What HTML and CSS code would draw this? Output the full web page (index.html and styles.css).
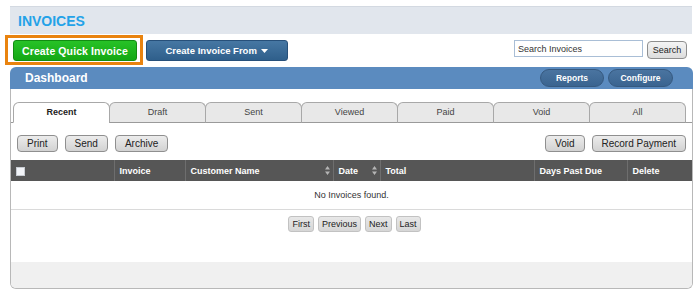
FILE: index.html
```html
<!DOCTYPE html>
<html lang="en">
<head>
<meta charset="UTF-8">
<title>Invoices</title>
<link rel="stylesheet" href="styles.css">
</head>
<body>
<div class="page">
  <div class="title-bar"><h1>INVOICES</h1></div>

  <div class="toolbar">
    <div class="highlight">
      <button class="btn-green">Create Quick Invoice</button>
    </div>
    <button class="btn-blue">Create Invoice From
      <svg width="7" height="4" viewBox="0 0 7 4"><path d="M0 0h7L3.5 4z" fill="#fff"/></svg>
    </button>
    <div class="search">
      <input type="text" value="Search Invoices">
      <button class="btn-grey">Search</button>
    </div>
  </div>

  <div class="panel">
    <div class="panel-head">
      <span class="panel-title">Dashboard</span>
      <div class="pills">
        <button class="pill">Reports</button>
        <button class="pill">Configure</button>
      </div>
    </div>
    <div class="panel-body">
      <div class="tabs">
        <div class="tab active">Recent</div>
        <div class="tab">Draft</div>
        <div class="tab">Sent</div>
        <div class="tab">Viewed</div>
        <div class="tab">Paid</div>
        <div class="tab">Void</div>
        <div class="tab">All</div>
      </div>

      <div class="actions">
        <div class="group">
          <button class="btn">Print</button>
          <button class="btn">Send</button>
          <button class="btn">Archive</button>
        </div>
        <div class="group">
          <button class="btn">Void</button>
          <button class="btn">Record Payment</button>
        </div>
      </div>

      <table class="grid">
        <colgroup>
          <col style="width:103px"><col style="width:71px"><col style="width:148px"><col style="width:47px">
          <col style="width:154px"><col style="width:93px"><col style="width:65px">
        </colgroup>
        <thead>
          <tr>
            <th><span class="check"></span></th>
            <th>Invoice</th>
            <th class="sortable">Customer Name <svg class="sort" width="5" height="9" viewBox="0 0 5 9"><path d="M2.5 0L5 3.5H0zM2.5 9L0 5.5h5z" fill="#b5b5b5"/></svg></th>
            <th class="sortable">Date <svg class="sort" width="5" height="9" viewBox="0 0 5 9"><path d="M2.5 0L5 3.5H0zM2.5 9L0 5.5h5z" fill="#b5b5b5"/></svg></th>
            <th>Total</th>
            <th>Days Past Due</th>
            <th>Delete</th>
          </tr>
        </thead>
        <tbody>
          <tr><td colspan="7" class="empty">No Invoices found.</td></tr>
        </tbody>
      </table>

      <div class="pager">
        <button class="pg">First</button>
        <button class="pg">Previous</button>
        <button class="pg">Next</button>
        <button class="pg">Last</button>
      </div>

      <div class="panel-foot"></div>
    </div>
  </div>
</div>
</body>
</html>
```

FILE: styles.css
```css
body {
  margin: 0;
  font-family: "Liberation Sans", Arial, sans-serif;
  background: #fff;
  color: #222;
}
button {
  font-family: "Liberation Sans", Arial, sans-serif;
  cursor: pointer;
}
.page {
  width: 683px;
  padding: 6px 0 0 10px;
}

/* title */
.title-bar {
  width: 682px;
  height: 28px;
  background: #e1e6ed;
  border-top: 1px solid #d3d9e1;
  box-sizing: border-box;
  display: flex;
  align-items: center;
  padding-left: 8px;
}
.title-bar h1 {
  margin: 0;
  font-size: 14px;
  font-weight: bold;
  color: #23a2e8;
}

/* toolbar */
.toolbar {
  display: flex;
  align-items: flex-start;
  margin: 1px 0 0 -5px;
  height: 30px;
}
.highlight {
  border: 3px solid #e9830f;
  padding: 2px 3px 1px 5px;
}
.btn-green {
  width: 124px;
  height: 21px;
  background: linear-gradient(#27c227, #14a814);
  border: 1px solid #128c12;
  border-radius: 3px;
  color: #fff;
  font-size: 10.5px;
  font-weight: bold;
  letter-spacing: 0.1px;
  padding: 0;
}
.btn-blue {
  margin: 5px 0 0 3px;
  width: 142px;
  height: 21px;
  background: linear-gradient(#4677a3, #2f5f8b);
  border: 1px solid #27507a;
  border-radius: 3px;
  color: #fff;
  font-size: 9.5px;
  font-weight: bold;
  padding: 0;
}
.btn-blue svg {
  margin-left: 2px;
  vertical-align: middle;
}
.search {
  margin: 5px 0 0 auto;
  display: flex;
  align-items: flex-start;
  gap: 4px;
  padding-right: 6px;
}
.search input {
  width: 129px;
  height: 17px;
  box-sizing: border-box;
  border: 1px solid #a9bed6;
  font-family: "Liberation Sans", Arial, sans-serif;
  font-size: 9px;
  color: #333;
  padding: 0 3px;
  margin: 0;
}
.btn-grey {
  margin-top: 1px;
  width: 40px;
  height: 18px;
  background: linear-gradient(#f4f4f4, #dcdcdc);
  border: 1px solid #8e8e8e;
  border-radius: 4px;
  font-size: 9px;
  color: #222;
  padding: 0;
}

/* panel */
.panel {
  margin-top: 2px;
  width: 683px;
}
.panel-head {
  height: 22px;
  background: #5b8bbf;
  border-radius: 6px 6px 0 0;
  display: flex;
  align-items: center;
  justify-content: space-between;
  padding: 0 20px 0 15px;
}
.panel-title {
  color: #fff;
  font-size: 12px;
  font-weight: bold;
}
.pills {
  display: flex;
  gap: 4px;
}
.pill {
  height: 18px;
  width: 64px;
  border: 1px solid #36597f;
  border-radius: 9px;
  background: linear-gradient(#4a74a0, #3a6490);
  color: #fff;
  font-size: 8.5px;
  font-weight: bold;
  padding: 0;
}
.pill + .pill {
  width: 65px;
}
.panel-body {
  border: 1px solid #b8b8b8;
  border-top: none;
  border-radius: 0 0 6px 6px;
  padding-top: 13px;
  overflow: hidden;
}

/* tabs */
.tabs {
  display: flex;
  padding-left: 2px;
  border-bottom: 1px solid #9a9a9a;
  height: 20px;
}
.tab {
  width: 97px;
  margin-right: -1px;
  height: 21px;
  box-sizing: border-box;
  border: 1px solid #a8a8a8;
  border-bottom: 1px solid #9a9a9a;
  border-radius: 6px 6px 0 0;
  background: #e8e8e8;
  font-size: 9px;
  color: #444;
  display: flex;
  align-items: center;
  justify-content: center;
  padding-bottom: 2px;
}
.tab.active {
  background: #fff;
  border-bottom-color: #fff;
  font-weight: bold;
  color: #222;
}

/* action buttons */
.actions {
  display: flex;
  justify-content: space-between;
  padding: 0 6px;
  margin-top: 12px;
}
.group {
  display: flex;
  gap: 7px;
}
.btn {
  height: 17px;
  padding: 0 9px;
  background: linear-gradient(#ececec, #d2d2d2);
  border: 1px solid #8f8f8f;
  border-radius: 4px;
  font-size: 10px;
  color: #222;
}

/* grid */
.grid {
  margin-top: 8px;
  width: 681px;
  border-collapse: collapse;
  table-layout: fixed;
}
.grid th {
  height: 21px;
  background: #565656;
  color: #fff;
  font-size: 9px;
  font-weight: bold;
  text-align: left;
  padding: 0 5px;
  border-left: 1px solid #6e6e6e;
  white-space: nowrap;
}
.grid th:first-child {
  border-left: none;
}
.sortable {
  position: relative;
}
.sort {
  position: absolute;
  right: 3px;
  top: 6px;
}
.check {
  display: inline-block;
  width: 7px;
  height: 7px;
  background: #f2f4f8;
  border: 1px solid #c8ccd2;
  vertical-align: middle;
}
.empty {
  height: 28px;
  text-align: center;
  font-size: 9px;
  color: #333;
  border-bottom: 1px solid #dadada;
  padding: 0;
}

/* pager */
.pager {
  display: flex;
  justify-content: center;
  gap: 4px;
  margin: 6px 0 0 6px;
  height: 16px;
}
.pg {
  height: 16px;
  padding: 0 3px;
  background: linear-gradient(#e8e8e8, #d6d6d6);
  border: 1px solid #c2c2c2;
  border-radius: 3px;
  font-size: 9px;
  color: #222;
}

.panel-foot {
  margin-top: 30px;
  height: 26px;
  background: #f0f0f0;
}
```
